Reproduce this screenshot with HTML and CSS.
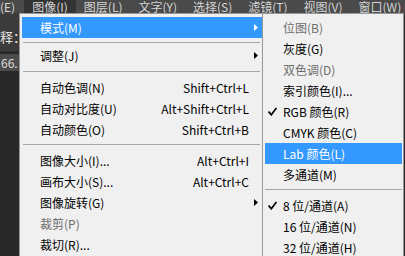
FILE: index.html
```html
<!DOCTYPE html>
<html lang="zh-CN">
<head>
<meta charset="utf-8">
<title>图像 - 模式</title>
<link rel="stylesheet" href="styles.css">
</head>
<body>
<div class="menubar">
  <span class="mb-item first">(E)</span>
  <span class="mb-item active">图像(I)</span>
  <span class="mb-item">图层(L)</span>
  <span class="mb-item">文字(Y)</span>
  <span class="mb-item">选择(S)</span>
  <span class="mb-item">滤镜(T)</span>
  <span class="mb-item">视图(V)</span>
  <span class="mb-item">窗口(W)</span>
</div>
<div class="side">
  <div class="side-head">释：</div>
  <div class="side-field">66.</div>
</div>

<div class="menu main-menu">
  <div class="item hl"><span class="gut"></span><span class="label">模式(M)</span><svg class="arrow" width="4" height="7" viewBox="0 0 4 7"><path d="M0 0L4 3.5L0 7z"/></svg></div>
  <div class="sep sep-a"></div>
  <div class="item"><span class="gut"></span><span class="label">调整(J)</span><svg class="arrow" width="4" height="7" viewBox="0 0 4 7"><path d="M0 0L4 3.5L0 7z"/></svg></div>
  <div class="sep sep-b"></div>
  <div class="item"><span class="gut"></span><span class="label">自动色调(N)</span><span class="key">Shift+Ctrl+L</span></div>
  <div class="item"><span class="gut"></span><span class="label">自动对比度(U)</span><span class="key">Alt+Shift+Ctrl+L</span></div>
  <div class="item"><span class="gut"></span><span class="label">自动颜色(O)</span><span class="key">Shift+Ctrl+B</span></div>
  <div class="sep"></div>
  <div class="item"><span class="gut"></span><span class="label">图像大小(I)...</span><span class="key">Alt+Ctrl+I</span></div>
  <div class="item"><span class="gut"></span><span class="label">画布大小(S)...</span><span class="key">Alt+Ctrl+C</span></div>
  <div class="item"><span class="gut"></span><span class="label">图像旋转(G)</span><svg class="arrow" width="4" height="7" viewBox="0 0 4 7"><path d="M0 0L4 3.5L0 7z"/></svg></div>
  <div class="item dis"><span class="gut"></span><span class="label">裁剪(P)</span></div>
  <div class="item"><span class="gut"></span><span class="label">裁切(R)...</span></div>
</div>

<div class="menu sub-menu">
  <div class="item dis"><span class="gut"></span><span class="label">位图(B)</span></div>
  <div class="item"><span class="gut"></span><span class="label">灰度(G)</span></div>
  <div class="item dis"><span class="gut"></span><span class="label">双色调(D)</span></div>
  <div class="item"><span class="gut"></span><span class="label">索引颜色(I)...</span></div>
  <div class="item"><span class="gut"><svg class="check" width="9" height="9" viewBox="0 0 9 9"><path d="M0.6 4.6L3.3 7.8L8.4 0.9"/></svg></span><span class="label">RGB 颜色(R)</span></div>
  <div class="item"><span class="gut"></span><span class="label">CMYK 颜色(C)</span></div>
  <div class="item hl"><span class="gut"></span><span class="label">Lab 颜色(L)</span></div>
  <div class="item"><span class="gut"></span><span class="label">多通道(M)</span></div>
  <div class="sep"></div>
  <div class="item"><span class="gut"><svg class="check" width="9" height="9" viewBox="0 0 9 9"><path d="M0.6 4.6L3.3 7.8L8.4 0.9"/></svg></span><span class="label">8 位/通道(A)</span></div>
  <div class="item"><span class="gut"></span><span class="label">16 位/通道(N)</span></div>
  <div class="item"><span class="gut"></span><span class="label">32 位/通道(H)</span></div>
</div>
</body>
</html>
```

FILE: styles.css
```css
* {
  box-sizing: border-box;
  margin: 0;
  padding: 0;
}

html, body {
  width: 405px;
  height: 256px;
  overflow: hidden;
}

body {
  position: relative;
  background: #282828;
  font-family: "Noto Sans CJK SC", "Noto Sans", sans-serif;
  font-size: 12px;
}

/* top menu bar */
.menubar {
  display: flex;
  height: 13px;
  background: #4a4a4a;
  color: #d4d4d4;
  line-height: 13px;
  white-space: nowrap;
}

.mb-item {
  padding: 0 8px;
  flex-shrink: 0;
}

.mb-item.first {
  padding-left: 0;
  padding-right: 9px;
}

.mb-item.active {
  background: #343434;
}

/* left panel behind menus */
.side {
  width: 60px;
}

.side-head {
  height: 39px;
  background: #3b3b3b;
  color: #e8e8e8;
  font-size: 13px;
  line-height: 14px;
  padding-top: 17px;
  border-bottom: 1px solid #2e2e2e;
}

.side-field {
  margin-top: 2px;
  height: 17px;
  background: #4c4c4c;
  color: #dedede;
  line-height: 17px;
  padding-left: 1px;
}

/* dropdown menus */
.menu {
  position: absolute;
  top: 13px;
  background: #f0f0f0;
  border: 1px solid #979797;
  color: #000;
  white-space: nowrap;
}

.main-menu {
  left: 19px;
  width: 250px;
  padding: 3px 2px;
}

.sub-menu {
  left: 262px;
  width: 142px;
  padding: 3px 1px 3px 2px;
}

.item {
  display: flex;
  align-items: center;
  height: 21px;
  line-height: 21px;
  padding-right: 8px;
}

.gut {
  width: 18px;
  flex-shrink: 0;
  display: flex;
  align-items: center;
}

.label {
  flex: 1;
}

.item.hl {
  background: #3399ff;
  color: #fff;
}

.item.dis {
  color: #6d6d6d;
}

.key {
  margin-right: 9px;
}

.arrow {
  fill: currentColor;
}

.check {
  margin-left: 3px;
  fill: none;
  stroke: #000;
  stroke-width: 1.7;
}

.sep {
  height: 10px;
  padding-top: 4px;
}

.sep::before {
  content: "";
  display: block;
  height: 1px;
  background: #a6a6a6;
}

.main-menu .sep::before {
  margin: 0 6px 0 1px;
}

.sep.sep-a {
  height: 7px;
  padding-top: 4px;
}

.sep.sep-b {
  height: 11px;
  padding-top: 5px;
}
```
